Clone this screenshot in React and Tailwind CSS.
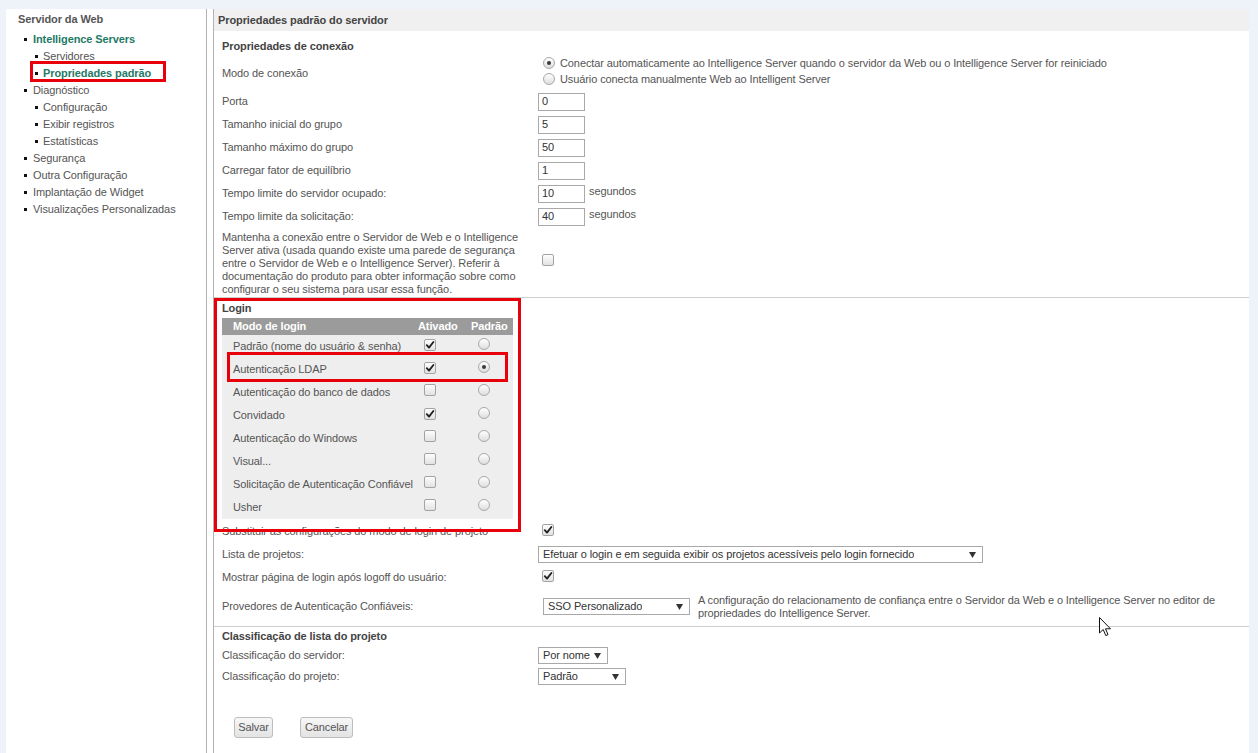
import React from 'react';

const FONT = { fontFamily: '"Liberation Sans", Arial, sans-serif' };

const Check = ({ checked = false }) => (
  <span className="inline-flex w-[12px] h-[12px] shrink-0 items-center justify-center rounded-[2px] border border-[#a3a3a3] bg-linear-to-b from-[#fdfdfd] to-[#e2e2e2]">
    {checked && (
      <svg width="10" height="10" viewBox="0 0 10 10">
        <path d="M1.8 5.2 L4 7.6 L8.4 2" fill="none" stroke="#222" strokeWidth="1.9" strokeLinecap="round" strokeLinejoin="round" />
      </svg>
    )}
  </span>
);

const Radio = ({ checked = false, className = '' }) => (
  <span className={`inline-flex w-[12px] h-[12px] shrink-0 items-center justify-center rounded-full border border-[#a8a8a8] bg-linear-to-b from-[#ffffff] to-[#dedede] ${className}`}>
    {checked && <span className="w-[4px] h-[4px] rounded-full bg-[#3a3a3a]" />}
  </span>
);

const Select = ({ text, className = '' }) => (
  <div className={`flex h-[17px] items-center justify-between border border-[#a9a9a9] bg-white pl-[4px] pr-[6px] text-[#333] ${className}`}>
    <span className="truncate">{text}</span>
    <svg width="7" height="6" viewBox="0 0 7 6" className="shrink-0">
      <path d="M0 0 H7 L3.5 6 Z" fill="#333" />
    </svg>
  </div>
);

const NumInput = ({ value }) => (
  <div className="flex h-[18px] w-[47px] items-center border border-[#a9a9a9] bg-white pl-[3px] text-[#333]">{value}</div>
);

const Row = ({ label, h, children }) => (
  <div className={`grid grid-cols-[316px_1fr] items-center pl-[8px] ${h}`}>
    <div className="text-[#555]">{label}</div>
    <div className="flex items-center">{children}</div>
  </div>
);

const navItems = [
  { level: 1, text: 'Intelligence Servers', active: true },
  { level: 2, text: 'Servidores' },
  { level: 2, text: 'Propriedades padrão', active: true },
  { level: 1, text: 'Diagnóstico' },
  { level: 2, text: 'Configuração' },
  { level: 2, text: 'Exibir registros' },
  { level: 2, text: 'Estatísticas' },
  { level: 1, text: 'Segurança' },
  { level: 1, text: 'Outra Configuração' },
  { level: 1, text: 'Implantação de Widget' },
  { level: 1, text: 'Visualizações Personalizadas' },
];

const loginModes = [
  { name: 'Padrão (nome do usuário & senha)', on: true },
  { name: 'Autenticação LDAP', on: true, def: true },
  { name: 'Autenticação do banco de dados' },
  { name: 'Convidado', on: true },
  { name: 'Autenticação do Windows' },
  { name: 'Visual...' },
  { name: 'Solicitação de Autenticação Confiável' },
  { name: 'Usher' },
];

export default function App() {
  return (
    <div className="relative flex h-[753px] bg-[#eef2f9] pt-[9px] pl-[6px] pr-[9px] text-[11px] tracking-[-0.1px] overflow-hidden" style={FONT}>
      {/* Sidebar */}
      <div className="w-[201px] shrink-0 border-r border-[#b3b3b3] bg-white">
        <div className="flex h-[21px] items-center pl-[12px] font-bold text-[#555]">Servidor da Web</div>
        <div className="mt-[1px]">
          {navItems.map((item) => (
            <div
              key={item.text}
              className={`flex h-[17px] items-center ${item.level === 1 ? 'pl-[18px] gap-[6px]' : 'pl-[29px] gap-[5px]'}`}
            >
              <span className="w-[3px] h-[3px] bg-[#111]" />
              <span className={item.active ? 'font-bold text-[#1f7a66]' : 'text-[#555]'}>{item.text}</span>
            </div>
          ))}
        </div>
      </div>
      <div className="w-[6px] shrink-0 bg-white" />

      {/* Main */}
      <div className="flex-1 border-l border-[#b3b3b3] bg-white">
        <div className="flex h-[22px] items-center bg-[#f0f0f0] pl-[4px] font-bold text-[#444]">Propriedades padrão do servidor</div>

        <div className="mt-[6px] flex h-[18px] items-center pl-[8px] font-bold text-[#444]">Propriedades de conexão</div>

        <div className="grid h-[35px] grid-cols-[316px_1fr] items-center pl-[8px]">
          <div className="pt-[1px] text-[#555]">Modo de conexão</div>
          <div className="flex flex-col self-start text-[#555]">
            <div className="flex h-[16px] items-center gap-[5px] pl-[5px]">
              <Radio checked />
              <span>Conectar automaticamente ao Intelligence Server quando o servidor da Web ou o Intelligence Server for reiniciado</span>
            </div>
            <div className="flex h-[16px] items-center gap-[5px] pl-[5px]">
              <Radio />
              <span>Usuário conecta manualmente Web ao Intelligent Server</span>
            </div>
          </div>
        </div>

        <Row label="Porta" h="h-[23px]"><NumInput value="0" /></Row>
        <Row label="Tamanho inicial do grupo" h="h-[23px]"><NumInput value="5" /></Row>
        <Row label="Tamanho máximo do grupo" h="h-[23px]"><NumInput value="50" /></Row>
        <Row label="Carregar fator de equilíbrio" h="h-[23px]"><NumInput value="1" /></Row>
        <Row label="Tempo limite do servidor ocupado:" h="h-[23px]">
          <NumInput value="10" />
          <span className="mb-[4px] ml-[4px] text-[#555]">segundos</span>
        </Row>
        <Row label="Tempo limite da solicitação:" h="h-[23px]">
          <NumInput value="40" />
          <span className="mb-[4px] ml-[4px] text-[#555]">segundos</span>
        </Row>

        <div className="grid h-[69px] grid-cols-[316px_1fr] items-center pl-[8px]">
          <p className="pt-[1px] leading-[13px] text-[#555]">
            Mantenha a conexão entre o Servidor de Web e o Intelligence<br />
            Server ativa (usada quando existe uma parede de segurança<br />
            entre o Servidor de Web e o Intelligence Server). Referir à<br />
            documentação do produto para obter informação sobre como<br />
            configurar o seu sistema para usar essa função.
          </p>
          <div className="pl-[4px]"><Check /></div>
        </div>

        {/* Login */}
        <div className="border-t border-[#cfcfcf]">
          <div className="flex h-[20px] items-center pl-[8px] font-bold text-[#444]">Login</div>
          <div className="ml-[8px] w-[291px] bg-[#eeeeee]">
            <div className="flex h-[17px] items-center bg-[#9b9b9b] font-bold text-white">
              <div className="w-[192px] pl-[11px]">Modo de login</div>
              <div className="w-[52px] pl-[4px]">Ativado</div>
              <div className="w-[47px] pl-[5px]">Padrão</div>
            </div>
            {loginModes.map((m) => (
              <div key={m.name} className="flex h-[23px] items-center text-[#555]">
                <div className="w-[192px] pl-[11px]">{m.name}</div>
                <div className="w-[52px] pl-[10px]"><Check checked={m.on} /></div>
                <div className="flex w-[47px] pl-[12px]"><Radio checked={m.def} className="mb-[5px]" /></div>
              </div>
            ))}
          </div>
        </div>

        <div className="mt-[1px]" />
        <Row label="Substituir as configurações do modo de login de projeto" h="h-[23px]">
          <span className="pl-[4px]"><Check checked /></span>
        </Row>
        <Row label="Lista de projetos:" h="h-[23px]">
          <Select text="Efetuar o login e em seguida exibir os projetos acessíveis pelo login fornecido" className="w-[445px]" />
        </Row>
        <Row label="Mostrar página de login após logoff do usuário:" h="h-[23px]">
          <span className="pl-[4px]"><Check checked /></span>
        </Row>
        <Row label="Provedores de Autenticação Confiáveis:" h="h-[35px]">
          <Select text="SSO Personalizado" className="ml-[5px] w-[147px]" />
          <p className="ml-[8px] leading-[13px] text-[#555]">
            A configuração do relacionamento de confiança entre o Servidor da Web e o Intelligence Server no editor de<br />
            propriedades do Intelligence Server.
          </p>
        </Row>

        <div className="mt-[2px] border-t border-[#cfcfcf]">
          <div className="flex h-[18px] items-center pl-[8px] font-bold text-[#444]">Classificação de lista do projeto</div>
          <Row label="Classificação do servidor:" h="h-[21px]">
            <Select text="Por nome" className="w-[70px]" />
          </Row>
          <Row label="Classificação do projeto:" h="h-[21px]">
            <Select text="Padrão" className="w-[88px]" />
          </Row>
        </div>

        <div className="mt-[30px] flex gap-[27px] pl-[20px]">
          <button className="h-[21px] w-[39px] rounded-[3px] border border-[#bdbdbd] bg-linear-to-b from-[#f7f7f7] to-[#e3e3e3] text-[#555]">Salvar</button>
          <button className="h-[21px] w-[53px] rounded-[3px] border border-[#bdbdbd] bg-linear-to-b from-[#f7f7f7] to-[#e3e3e3] text-[#555]">Cancelar</button>
        </div>
      </div>

      {/* Annotation boxes */}
      <div className="pointer-events-none absolute left-[30px] top-[61px] h-[21px] w-[136px] border-[3px] border-[#e8000b]" />
      <div className="pointer-events-none absolute left-[214px] top-[298px] h-[234px] w-[307px] border-[3px] border-[#e8000b]" />
      <div className="pointer-events-none absolute left-[227px] top-[352px] h-[30px] w-[281px] border-[3px] border-[#e8000b]" />

      {/* Mouse cursor */}
      <svg className="pointer-events-none absolute left-[1099px] top-[617px]" width="13" height="20" viewBox="0 0 13 20">
        <path d="M0.5 0.5 V16 L4.2 12.5 L6.8 18.6 L9 17.6 L6.5 11.8 H11.5 Z" fill="#fff" stroke="#111" strokeWidth="1" strokeLinejoin="round" />
      </svg>
    </div>
  );
}
